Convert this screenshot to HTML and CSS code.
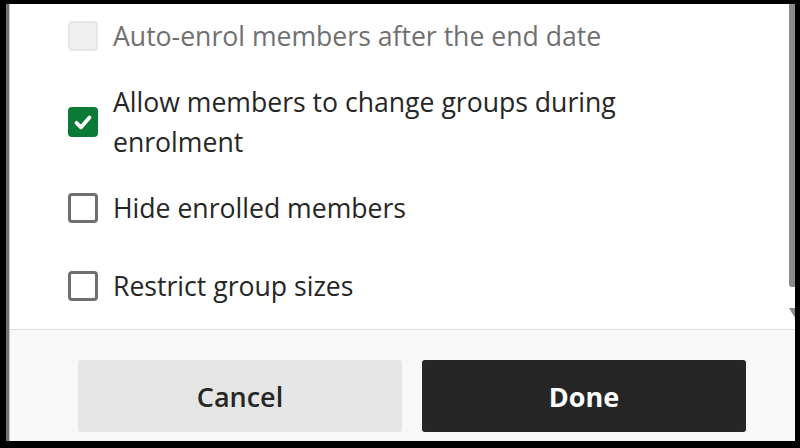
FILE: index.html
```html
<!DOCTYPE html>
<html lang="en">
<head>
<meta charset="utf-8">
<title>Group enrolment settings</title>
<link rel="stylesheet" href="styles.css">
</head>
<body>
<div class="frame">
  <div class="panel">
    <div class="content">
      <ul class="options">
        <li class="option disabled">
          <span class="box"></span>
          <span class="label">Auto-enrol members after the end date</span>
        </li>
        <li class="option">
          <span class="box checked">
            <svg viewBox="0 0 30 30" width="30" height="30" aria-hidden="true"><path d="M8.5 15.8 L13 20.3 L21.5 10.5" fill="none" stroke="#fff" stroke-width="3.8" stroke-linecap="round" stroke-linejoin="round"/></svg>
          </span>
          <span class="label">Allow members to change groups during<br>enrolment</span>
        </li>
        <li class="option">
          <span class="box"></span>
          <span class="label">Hide enrolled members</span>
        </li>
        <li class="option last">
          <span class="box"></span>
          <span class="label">Restrict group sizes</span>
        </li>
      </ul>
      <div class="scrollbar">
        <div class="thumb"></div>
        <svg class="arrow" viewBox="0 0 6 11" width="6" height="11" aria-hidden="true"><polygon points="0,0 6,0 6,10" fill="#8a8a8a"/></svg>
      </div>
    </div>
    <div class="footer">
      <button class="btn cancel">Cancel</button>
      <button class="btn done">Done</button>
    </div>
  </div>
</div>
</body>
</html>
```
FILE: styles.css
```css
html, body {
  margin: 0;
  padding: 0;
}
body {
  background: #000;
  width: 800px;
  height: 448px;
  overflow: hidden;
  font-family: "Open Sans", "Noto Sans", sans-serif;
  color: #262626;
}
.frame {
  margin: 4px 5px 0 6px;
  height: 437px;
  border-left: 3px solid #707070;
  display: flex;
}
.panel {
  flex: 1;
  display: flex;
  flex-direction: column;
  background: #fff;
  border-left: 1px solid #c8c8c8;
}
.content {
  height: 325px;
  display: flex;
  border-bottom: 1px solid #dcdcdc;
  overflow: hidden;
}
.options {
  list-style: none;
  margin: 0;
  padding: 12px 0 0 58px;
  flex: 1;
  display: flex;
  flex-direction: column;
  gap: 26px;
}
.option {
  display: flex;
  align-items: center;
  gap: 15px;
  font-size: 26.6px;
  line-height: 40px;
}
.option.last {
  margin-top: 12px;
}
.box {
  width: 30px;
  height: 30px;
  box-sizing: border-box;
  border: 3px solid #6f6f6f;
  border-radius: 4px;
  flex: none;
  display: flex;
  align-items: center;
  justify-content: center;
}
.box.checked {
  border: none;
  background: #0b7a36;
}
.option.disabled .box {
  border: 2px solid #e6e6e6;
  background: #efefef;
}
.option.disabled .label {
  color: #707070;
}
.scrollbar {
  width: 6px;
  display: flex;
  flex-direction: column;
  align-items: flex-end;
  background: #fff;
}
.thumb {
  width: 6px;
  height: 283px;
  background: #8a8a8a;
  border-radius: 0 0 0 3px;
}
.arrow {
  margin-top: 21px;
}
.footer {
  flex: 1;
  background: #f8f8f8;
  display: flex;
  gap: 20px;
  padding: 30px 0 0 68px;
  align-items: flex-start;
}
.btn {
  width: 324px;
  height: 72px;
  border: none;
  border-radius: 3px;
  font-family: "Open Sans", "Noto Sans", sans-serif;
  font-size: 27px;
  font-weight: 600;
  cursor: pointer;
}
.cancel {
  background: #e5e5e5;
  color: #262626;
}
.done {
  background: #262626;
  color: #fff;
  font-weight: 700;
}
```
